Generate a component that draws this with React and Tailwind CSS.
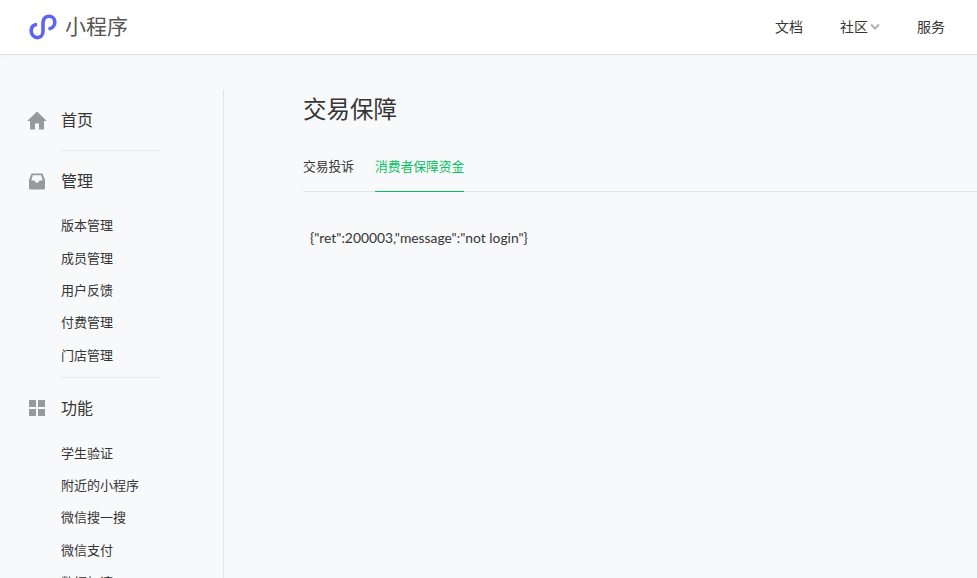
const font = "font-['Noto_Sans','Noto_Sans_CJK_SC',sans-serif]";

const LogoIcon = () => (
  <svg width="28" height="26" viewBox="0 0 28 26" fill="none" className="shrink-0">
    <path
      d="M6.5 10.7 C3.8 11.3 2.2 13.8 2.2 16.8 C2.2 20.6 5 23.6 8.3 23.6 C11.8 23.6 14 20.8 14 17.5 V8.5 C14 5 16.5 2.3 20 2.3 C23.4 2.3 25.8 5 25.8 8 C25.8 11.2 23.8 14 21 14.6"
      stroke="#5f63f2"
      strokeWidth="3.6"
      strokeLinecap="round"
    />
  </svg>
);

const HomeIcon = () => (
  <svg width="20" height="19" viewBox="0 0 20 19" className="shrink-0">
    <path d="M10 0.5 L19.8 10 H17 V18.5 H12 V12.5 H8 V18.5 H3 V10 H0.2 Z" fill="#999" />
  </svg>
);

const InboxIcon = () => (
  <svg width="18" height="17" viewBox="0 0 18 17" className="shrink-0">
    <path d="M3.5 0.5 H14.5 L17 7 V15 A1.5 1.5 0 0 1 15.5 16.5 H2.5 A1.5 1.5 0 0 1 1 15 V7 Z" fill="#999" />
    <path d="M3.4 7.5 L4.8 2.2 H13.2 L14.6 7.5 H11.5 L10.5 9.5 H7.5 L6.5 7.5 Z" fill="#f8f9fb" />
  </svg>
);

const GridIcon = () => (
  <svg width="16" height="16" viewBox="0 0 16 16" className="shrink-0">
    <rect x="0" y="0" width="7" height="7" fill="#999" />
    <rect x="9" y="0" width="7" height="7" fill="#999" />
    <rect x="0" y="9" width="7" height="7" fill="#999" />
    <rect x="9" y="9" width="7" height="7" fill="#999" />
  </svg>
);

const SectionHead = ({ icon, label }) => (
  <div className="flex h-[60px] items-center">
    <div className="flex w-[61px] shrink-0 items-center justify-center pl-[26px] pr-[13px]">{icon}</div>
    <span className="text-[16px] text-[#353535]">{label}</span>
  </div>
);

const SubItem = ({ label }) => (
  <div className="flex h-[32.3px] items-center pl-[61px] text-[13px] text-[#353535]">{label}</div>
);

const Divider = () => <div className="ml-[61px] h-px w-[99px] bg-[#e7e7eb]" />;

export default function App() {
  return (
    <div className={`${font} h-[578px] w-[977px] overflow-hidden bg-[#f8f9fb]`}>
      <header className="flex h-[55px] items-center justify-between border-b border-[#e3e4e7] bg-white pl-[29px] pr-[32px] shadow-[0_1px_2px_rgba(0,0,0,0.04)]">
        <div className="flex items-center gap-[8px]">
          <LogoIcon />
          <span className="text-[21px] text-[#555]">小程序</span>
        </div>
        <nav className="-mt-[1px] flex items-center text-[14px] text-[#353535]">
          <span>文档</span>
          <span className="ml-[37px] flex items-center gap-[2px]">
            社区
            <svg width="10" height="7" viewBox="0 0 10 7" fill="none">
              <path d="M1 1.5 L5 5.5 L9 1.5" stroke="#b2b2b2" strokeWidth="2" />
            </svg>
          </span>
          <span className="ml-[37px]">服务</span>
        </nav>
      </header>
      <div className="flex h-[523px]">
        <aside className="mt-[35px] w-[224px] shrink-0 border-r border-[#e3e4e7]">
          <SectionHead icon={<HomeIcon />} label="首页" />
          <Divider />
          <SectionHead icon={<InboxIcon />} label="管理" />
          <div className="-mt-[1px] pb-[6px]">
            <SubItem label="版本管理" />
            <SubItem label="成员管理" />
            <SubItem label="用户反馈" />
            <SubItem label="付费管理" />
            <SubItem label="门店管理" />
          </div>
          <Divider />
          <SectionHead icon={<GridIcon />} label="功能" />
          <div className="-mt-[1px]">
            <SubItem label="学生验证" />
            <SubItem label="附近的小程序" />
            <SubItem label="微信搜一搜" />
            <SubItem label="微信支付" />
            <SubItem label="数据加速" />
          </div>
        </aside>
        <main className="min-w-0 flex-1 pl-[79px] pt-[36px]">
          <h1 className="text-[23.5px] leading-[36px] font-normal text-[#353535]">交易保障</h1>
          <div className="mt-[18px] flex h-[47px] gap-[21px] border-b border-[#e3e4e7] text-[12.75px]">
            <span className="h-[47px] pt-[12px] text-[#353535]">交易投诉</span>
            <span className="h-[47px] border-b border-[#07c160] pt-[12px] text-[#07c160]">消费者保障资金</span>
          </div>
          <p className="mt-[35px] pl-[7px] font-['Lato','Noto_Sans_CJK_SC',sans-serif] text-[13.85px] leading-[22px] text-[#353535]">
            {'{"ret":200003,"message":"not login"}'}
          </p>
        </main>
      </div>
    </div>
  );
}
